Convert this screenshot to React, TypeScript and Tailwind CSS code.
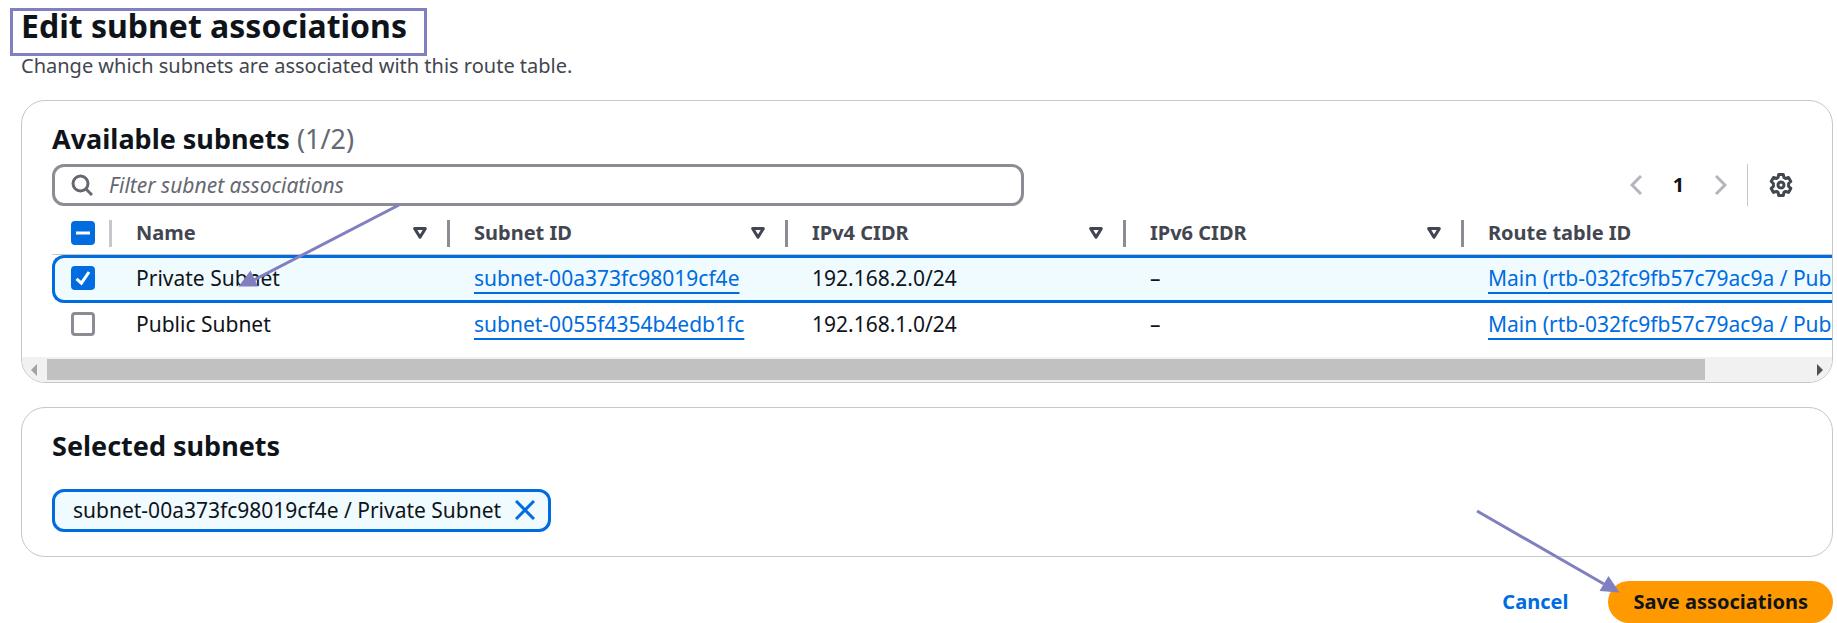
import type { ReactNode } from 'react';

type Subnet = { name: string; id: string; ipv4: string; ipv6: string; routeTable: string; selected: boolean };

const subnets: Subnet[] = [
  {
    name: 'Private Subnet',
    id: 'subnet-00a373fc98019cf4e',
    ipv4: '192.168.2.0/24',
    ipv6: '–',
    routeTable: 'Main (rtb-032fc9fb57c79ac9a / Public)',
    selected: true,
  },
  {
    name: 'Public Subnet',
    id: 'subnet-0055f4354b4edb1fc',
    ipv4: '192.168.1.0/24',
    ipv6: '–',
    routeTable: 'Main (rtb-032fc9fb57c79ac9a / Public)',
    selected: false,
  },
];

const columns = ['Name', 'Subnet ID', 'IPv4 CIDR', 'IPv6 CIDR', 'Route table ID'];

function Checkbox({ label, checked, mixed }: { label: string; checked?: boolean; mixed?: boolean }) {
  return (
    <span className="relative block size-6">
      <input
        type="checkbox"
        aria-label={label}
        defaultChecked={checked || mixed}
        ref={(el) => {
          if (el) el.indeterminate = !!mixed;
        }}
        className="block size-6 appearance-none rounded-[4px] border-3 border-[#8c8c94] bg-white checked:border-[#006ce0] checked:bg-[#006ce0] indeterminate:border-[#006ce0] indeterminate:bg-[#006ce0]"
      />
      {(checked || mixed) && (
        <svg className="pointer-events-none absolute inset-0 size-6" viewBox="0 0 24 24" fill="none" stroke="#fff" strokeWidth="3">
          {mixed ? <path d="M5 12h14" /> : <path d="M5.5 12.8l4.9 4.4L18 6" />}
        </svg>
      )}
    </span>
  );
}

function SortIcon() {
  return (
    <svg className="h-3 w-3.5" viewBox="0 0 14 12" fill="none" stroke="#424650" strokeWidth="3" strokeLinejoin="round">
      <path d="M1.7 1.6h10.6L7 10.3z" />
    </svg>
  );
}

function Panel({ title, count, children }: { title: string; count?: string; children: ReactNode }) {
  return (
    <section className="relative overflow-hidden rounded-[24px] border border-[#c6c6cd] bg-white pt-5">
      <h2 className="px-[30px] text-[27px] leading-9 font-bold text-[#0f141a]">
        {title}
        {count && <span className="font-normal text-[#656871]"> {count}</span>}
      </h2>
      {children}
    </section>
  );
}

function HeaderRule({ dark }: { dark: boolean }) {
  return <span className={dark ? 'h-[27px] w-[3px] bg-[#8c8c94]' : 'h-[27px] w-[3px] bg-[#c6c6cd]'} />;
}

function SubnetTable() {
  return (
    <table className="w-[1905px] table-fixed border-separate border-spacing-0 text-left">
      <colgroup>
        <col className="w-[60px]" />
        <col className="w-[338px]" />
        <col className="w-[338px]" />
        <col className="w-[338px]" />
        <col className="w-[338px]" />
        <col />
      </colgroup>
      <thead>
        <tr className="h-[43px] text-[20px] leading-7 font-bold text-[#424650]">
          <th scope="col" className="border-b border-[#c6c6cd] p-0">
            <div className="flex items-center justify-between pl-[19px]">
              <Checkbox label="Select all subnets" mixed />
              <HeaderRule dark={false} />
            </div>
          </th>
          {columns.map((c, i) => (
            <th key={c} scope="col" className="border-b border-[#c6c6cd] p-0">
              <div className="flex items-center pl-6">
                <span className="flex-1">{c}</span>
                {i < columns.length - 1 && (
                  <span className="flex items-center gap-5">
                    <button type="button" aria-label={`Sort by ${c}`}>
                      <SortIcon />
                    </button>
                    <HeaderRule dark />
                  </span>
                )}
              </div>
            </th>
          ))}
        </tr>
      </thead>
      <tbody className="text-[21px] leading-7 text-[#0f141a]">
        {subnets.map((s) => {
          const cell = s.selected ? 'border-y-3 border-[#006ce0] bg-[#f0fbff] pt-0 pb-0.5 pl-6' : 'py-0 pl-6';
          return (
            <tr key={s.id} className={s.selected ? 'h-12' : 'h-[42px]'}>
              <td
                className={
                  s.selected
                    ? 'rounded-l-[12px] border-y-3 border-l-3 border-[#006ce0] bg-[#f0fbff] pt-0 pb-0.5 pl-4'
                    : 'py-0 pl-[19px]'
                }
              >
                <Checkbox label={`Select ${s.name}`} checked={s.selected} />
              </td>
              <td className={cell}>{s.name}</td>
              <td className={cell}>
                <a href="#subnet" className="text-[#006ce0] underline decoration-2 underline-offset-[6px] [text-decoration-skip-ink:none]">
                  {s.id}
                </a>
              </td>
              <td className={cell}>{s.ipv4}</td>
              <td className={cell}>{s.ipv6}</td>
              <td className={cell}>
                <a href="#route-table" className="whitespace-nowrap text-[#006ce0] underline decoration-2 underline-offset-[6px] [text-decoration-skip-ink:none]">
                  {s.routeTable}
                </a>
              </td>
            </tr>
          );
        })}
      </tbody>
    </table>
  );
}

function ScrollBar() {
  return (
    <div className="flex h-[25px] items-center bg-[#f1f1f1]" aria-hidden="true">
      <svg className="h-3 w-[25px] shrink-0" viewBox="0 0 25 12">
        <path d="M15 0v12L9 6z" fill="#a3a3a3" />
      </svg>
      <div className="flex flex-1">
        <div className="h-[21px] w-[94.2%] bg-[#c1c1c1]" />
      </div>
      <svg className="h-3 w-[25px] shrink-0" viewBox="0 0 25 12">
        <path d="M10 0v12l6-6z" fill="#505050" />
      </svg>
    </div>
  );
}

function Pagination() {
  return (
    <div className="flex items-center pr-[39px]">
      <button type="button" aria-label="Previous page">
        <svg className="h-5 w-3" viewBox="0 0 12 20" fill="none" stroke="#b4b4bb" strokeWidth="3">
          <path d="M11 1L2 10l9 9" />
        </svg>
      </button>
      <span className="w-[73px] text-center text-[20px] leading-7 font-bold text-[#0f141a]">1</span>
      <button type="button" aria-label="Next page">
        <svg className="h-5 w-3" viewBox="0 0 12 20" fill="none" stroke="#b4b4bb" strokeWidth="3">
          <path d="M1 1l9 9-9 9" />
        </svg>
      </button>
      <span className="ml-5 h-[42px] w-px bg-[#c6c6cd]" />
      <button type="button" aria-label="Preferences" className="ml-[21px]">
        <svg className="size-6" viewBox="0 0 24 24" fill="none" stroke="#424650" strokeWidth="3" strokeLinejoin="round">
          <path d="M9.7 1.6h4.6l.6 2.9 1.7 1 2.9-1 2.3 4-2.2 2v2.9l2.2 2-2.3 4-2.9-1-1.7 1-.6 3H9.7l-.6-3-1.7-1-2.9 1-2.3-4 2.2-2v-2.9l-2.2-2 2.3-4 2.9 1 1.7-1z" />
          <circle cx="12" cy="12" r="3" />
        </svg>
      </button>
    </div>
  );
}

export default function App() {
  return (
    <main className="bg-white pt-1.5 pr-1 pl-[21px] font-['Noto_Sans',sans-serif]">
      <header className="relative">
        <h1 className="text-[32px] leading-10 font-bold text-[#0f141a]">Edit subnet associations</h1>
        <span className="pointer-events-none absolute top-0.5 -left-[11px] h-12 w-[417px] border-3 border-[#8080c0]" />
        <p className="mt-1 text-[20px] leading-8 text-[#424650]">Change which subnets are associated with this route table.</p>
      </header>

      <div className="mt-[18px] flex flex-col gap-6">
        <Panel title="Available subnets" count="(1/2)">
          <div className="mt-[7px] flex items-center justify-between pl-[30px]">
            <label className="flex h-[42px] w-[972px] items-center gap-4 rounded-[12px] border-3 border-[#8c8c94] bg-white px-4">
              <svg className="size-[22px] shrink-0" viewBox="0 0 22 22" fill="none" stroke="#656871" strokeWidth="3">
                <circle cx="9.5" cy="9.5" r="7.5" />
                <path d="M15 15l6 6" />
              </svg>
              <input
                type="text"
                aria-label="Filter subnet associations"
                placeholder="Filter subnet associations"
                className="min-w-0 flex-1 bg-transparent text-[21px] leading-7 outline-none placeholder:text-[#656871] placeholder:italic"
              />
            </label>
            <Pagination />
          </div>
          <div className="mt-1.5 overflow-hidden pb-3 pl-[30px]">
            <SubnetTable />
          </div>
          <ScrollBar />
          <svg
            className="pointer-events-none absolute top-[103px] left-[215px] h-[84px] w-[164px]"
            viewBox="237 204 164 84"
            fill="#8080c0"
            aria-hidden="true"
          >
            <path d="M399 205L254 280" stroke="#8080c0" strokeWidth="3" />
            <path d="M250.5 270.5L238.5 286.5h19.5z" />
          </svg>
        </Panel>

        <Panel title="Selected subnets">
          <div className="mt-[25px] mb-6 ml-[30px] flex h-[43px] w-fit items-center gap-3.5 rounded-[12px] border-3 border-[#006ce0] bg-[#f0fbff] pr-[13px] pb-0.5 pl-[18px] text-[21px] leading-7 text-[#0f141a]">
            <span>subnet-00a373fc98019cf4e / Private Subnet</span>
            <button type="button" aria-label="Remove Private Subnet">
              <svg className="size-5" viewBox="0 0 20 20" fill="none" stroke="#006ce0" strokeWidth="3">
                <path d="M1 1l18 18M19 1L1 19" />
              </svg>
            </button>
          </div>
        </Panel>

        <footer className="relative flex h-[42px] items-center justify-end gap-10 text-[20px] leading-7 font-bold">
          <button type="button" className="text-[#006ce0]">
            Cancel
          </button>
          <button type="button" className="h-[42px] rounded-full bg-[#ff9900] px-[25px] text-[#0f141a]">
            Save associations
          </button>
          <svg
            className="pointer-events-none absolute right-[212px] bottom-[29px] h-[85px] w-[146px]"
            viewBox="1475 509 146 85"
            fill="#8080c0"
            aria-hidden="true"
          >
            <path d="M1477 511L1604 584" stroke="#8080c0" strokeWidth="3" />
            <path d="M1608.5 576l-9 15 20 1.5z" />
          </svg>
        </footer>
      </div>
    </main>
  );
}
